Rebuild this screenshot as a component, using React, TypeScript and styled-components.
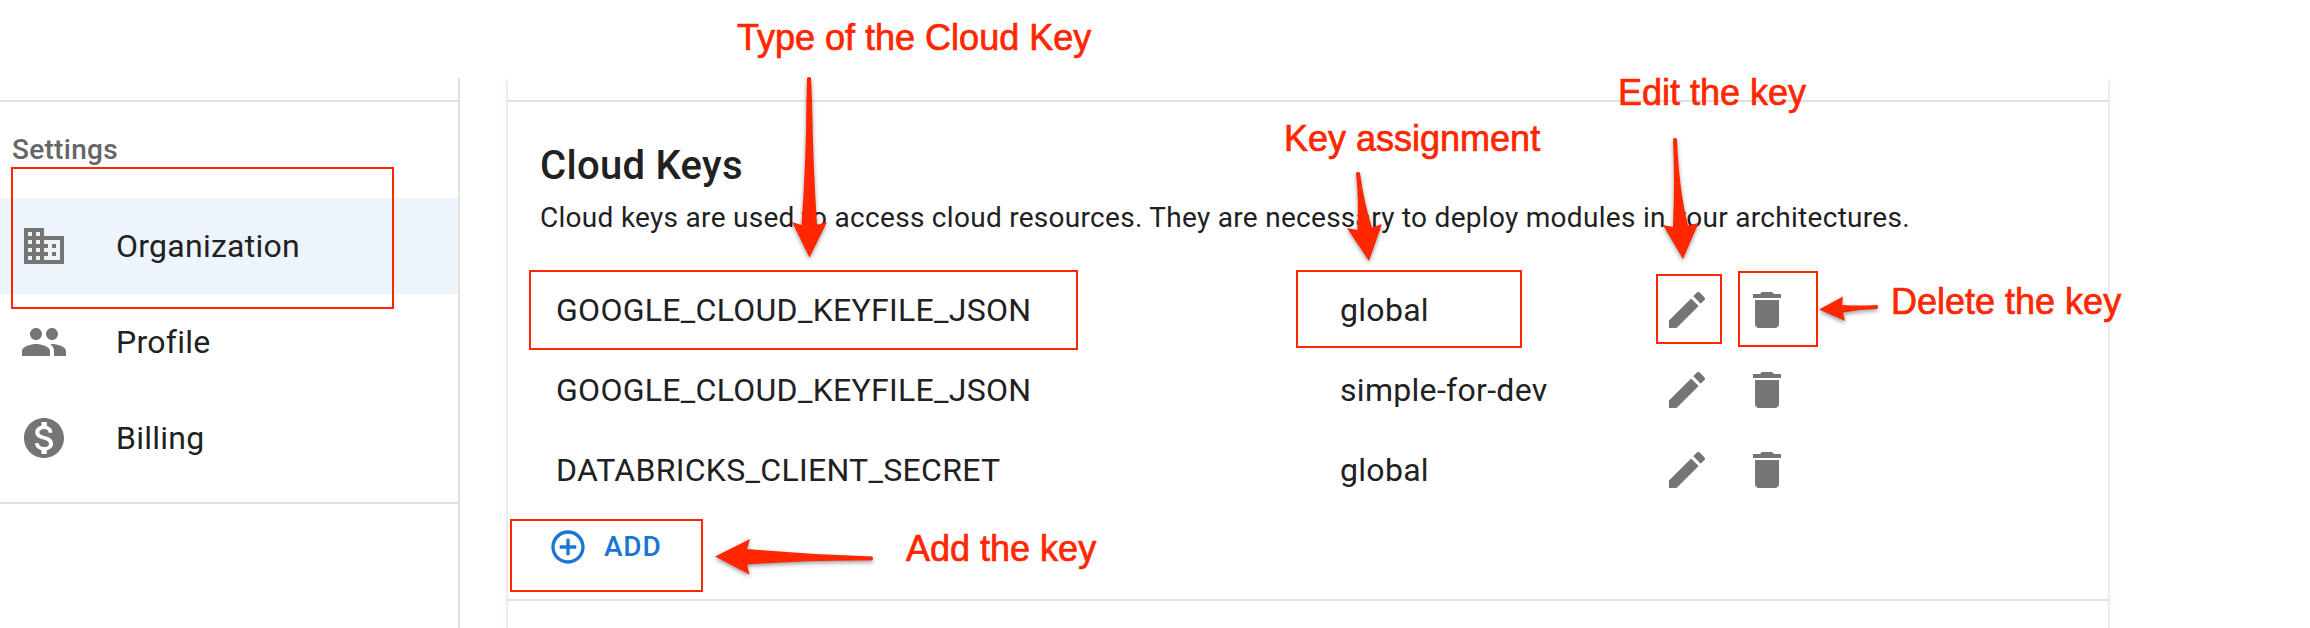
import React from "react";
import styled, { createGlobalStyle } from "styled-components";
import { MdBusiness, MdPeople, MdMonetizationOn, MdEdit, MdDelete, MdAddCircleOutline } from "react-icons/md";

const GlobalStyle = createGlobalStyle`
  *, *::before, *::after { box-sizing: border-box; }
  body { margin: 0; background: #fff; font-family: Roboto, sans-serif; color: #212121; overflow: hidden; }
`;

const Page = styled.div`
  position: relative;
  width: 2310px;
  height: 628px;
  padding-top: 78px;
  overflow: hidden;
`;

const Shell = styled.div`
  display: flex;
  height: 550px;
  overflow: hidden;
`;

const Sidebar = styled.nav`
  width: 460px;
  flex: none;
  border-right: 2px solid #e0e0e0;
`;

const Spacer = styled.div`
  height: 24px;
  border-bottom: 2px solid #e0e0e0;
`;

const NavList = styled.ul`
  list-style: none;
  margin: 0;
  padding: 0 0 16px;
  border-bottom: 2px solid #e0e0e0;
`;

const NavHeading = styled.li`
  height: 96px;
  padding-left: 12px;
  font-size: 28px;
  font-weight: 500;
  line-height: 96px;
  letter-spacing: 0.28px;
  color: #666;
`;

const NavItem = styled.li<{ $active?: boolean }>`
  display: flex;
  align-items: center;
  height: 96px;
  padding-left: 20px;
  font-size: 32px;
  letter-spacing: 0.26px;
  background: ${(p) => (p.$active ? "#edf4fb" : "transparent")};
`;

const NavIcon = styled.span`
  display: flex;
  width: 96px;
  font-size: 48px;
  color: #757575;
`;

const Card = styled.main`
  width: 1600px;
  height: 600px;
  margin-left: 48px;
  background: #fff;
  box-shadow: 0 4px 2px -2px rgba(0, 0, 0, 0.2), 0 2px 2px rgba(0, 0, 0, 0.14), 0 2px 6px rgba(0, 0, 0, 0.12);
`;

const Section = styled.section`
  height: 499px;
  padding: 32px 32px 0;
  border-bottom: 2px solid #e0e0e0;
`;

const Title = styled.h2`
  margin: 0;
  font-size: 40px;
  font-weight: 500;
  line-height: 64px;
  letter-spacing: 0.3px;
`;

const Description = styled.p`
  margin: 0;
  font-size: 28px;
  line-height: 40px;
  letter-spacing: 0.29px;
`;

const KeyList = styled.div`
  padding-top: 32px;
`;

const KeyRow = styled.div`
  display: grid;
  grid-template-columns: 784px 323px 80px 80px;
  align-items: center;
  height: 80px;
  padding-left: 16px;
  font-size: 32px;
  letter-spacing: 0.3px;
`;

const IconButton = styled.button`
  display: flex;
  width: 48px;
  padding: 0;
  border: 0;
  background: none;
  font-size: 48px;
  color: #757575;
`;

const AddButton = styled.button`
  display: flex;
  align-items: center;
  gap: 16px;
  height: 73px;
  margin: 0;
  padding: 0 16px 0 8px;
  border: 0;
  background: none;
  font: 500 28px Roboto, sans-serif;
  letter-spacing: 0.8px;
  color: #1976d2;

  svg { font-size: 40px; }
`;

const Overlay = styled.div`
  position: absolute;
  inset: 0;
  pointer-events: none;
`;

const Frame = styled.div<{ $x: number; $y: number; $w: number; $h: number }>`
  position: absolute;
  left: ${(p) => p.$x}px;
  top: ${(p) => p.$y}px;
  width: ${(p) => p.$w}px;
  height: ${(p) => p.$h}px;
  border: 2px solid #ff2600;
`;

const Note = styled.span<{ $x: number; $y: number }>`
  position: absolute;
  left: ${(p) => p.$x}px;
  top: ${(p) => p.$y}px;
  font: 36px/40px "Liberation Sans", sans-serif;
  white-space: nowrap;
  color: #ff2600;
  -webkit-text-stroke: 0.7px #ff2600;
`;

const Arrows = styled.svg`
  position: absolute;
  inset: 0;
  fill: #ff2600;
  filter: drop-shadow(0 2px 2px rgba(0, 0, 0, 0.4));
`;

const keys = [
  { type: "GOOGLE_CLOUD_KEYFILE_JSON", scope: "global" },
  { type: "GOOGLE_CLOUD_KEYFILE_JSON", scope: "simple-for-dev" },
  { type: "DATABRICKS_CLIENT_SECRET", scope: "global" },
];

const arrows = [
  "M807 78Q809 76 811 78L812 100Q813 165 817 225L827 222L809.5 257.5L792 222L801.5 225Q806 165 806.5 100Z",
  "M1356 173Q1358 171 1360 173Q1364 203 1372 227.5L1382 224L1369 261L1347 228L1357.5 230Q1359 200 1356 173Z",
  "M1673 139Q1675 137 1677 139Q1679 190 1688 225.5L1698.5 223L1683 259L1663 225L1673 227Q1675 180 1673 139Z",
  "M1877 305Q1879 307 1877 309Q1860 309 1843 312.5L1845 321L1819 309.5L1843 296.5L1842 305Q1860 306 1877 305Z",
  "M872 556.5Q874 558.5 872 560.5Q810 560 747 564.5L749.5 574.5L715 556.5L750 539L747 549Q810 554.5 872 556.5Z",
];

export default function App() {
  return (
    <Page>
      <GlobalStyle />
      <Shell>
        <Sidebar>
          <Spacer />
          <NavList>
            <NavHeading>Settings</NavHeading>
            <NavItem $active><NavIcon><MdBusiness /></NavIcon>Organization</NavItem>
            <NavItem><NavIcon><MdPeople /></NavIcon>Profile</NavItem>
            <NavItem><NavIcon><MdMonetizationOn /></NavIcon>Billing</NavItem>
          </NavList>
        </Sidebar>
        <Card>
          <Spacer />
          <Section>
            <Title>Cloud Keys</Title>
            <Description>
              Cloud keys are used to access cloud resources. They are necessary to deploy modules in your architectures.
            </Description>
            <KeyList>
              {keys.map((k, i) => (
                <KeyRow key={i}>
                  <span>{k.type}</span>
                  <span>{k.scope}</span>
                  <IconButton aria-label="Edit"><MdEdit /></IconButton>
                  <IconButton aria-label="Delete"><MdDelete /></IconButton>
                </KeyRow>
              ))}
            </KeyList>
            <AddButton><MdAddCircleOutline />ADD</AddButton>
          </Section>
        </Card>
      </Shell>
      <Overlay>
        <Frame $x={11} $y={167} $w={383} $h={142} />
        <Frame $x={529} $y={270} $w={549} $h={80} />
        <Frame $x={1296} $y={270} $w={226} $h={78} />
        <Frame $x={1656} $y={274} $w={66} $h={70} />
        <Frame $x={1738} $y={271} $w={80} $h={76} />
        <Frame $x={510} $y={519} $w={193} $h={73} />
        <Note $x={737} $y={18}>Type of the Cloud Key</Note>
        <Note $x={1284} $y={119}>Key assignment</Note>
        <Note $x={1618} $y={73}>Edit the key</Note>
        <Note $x={1891} $y={282}>Delete the key</Note>
        <Note $x={906} $y={529}>Add the key</Note>
        <Arrows width="2310" height="628" viewBox="0 0 2310 628">
          {arrows.map((d) => <path key={d} d={d} />)}
        </Arrows>
      </Overlay>
    </Page>
  );
}
